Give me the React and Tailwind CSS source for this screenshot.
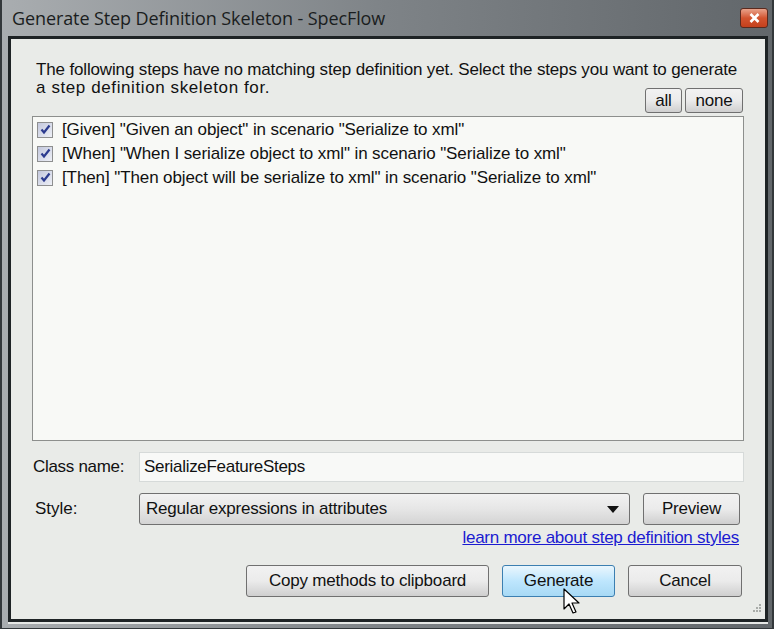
const steps = [
  '[Given] "Given an object" in scenario "Serialize to xml"',
  '[When] "When I serialize object to xml" in scenario "Serialize to xml"',
  '[Then] "Then object will be serialize to xml" in scenario "Serialize to xml"',
]

function CheckBox() {
  return (
    <div className="w-[16px] h-[16px] border border-[#8e8f8f] bg-gradient-to-br from-[#c3c8dd] to-[#eef0f6] flex items-center justify-center shrink-0">
      <svg width="11" height="11" viewBox="0 0 11 11">
        <path d="M1.5 5.5 L4 8.5 L9.5 1.5" fill="none" stroke="#2c3b8f" strokeWidth="2.2" />
      </svg>
    </div>
  )
}

function Btn({ children, className = '', primary }) {
  return (
    <button
      className={`flex items-center justify-center rounded-[3px] border text-[17px] tracking-[-0.2px] text-[#111] ${
        primary
          ? 'border-[#3c7fb1] bg-gradient-to-b from-[#eaf6fd] via-[#bee6fd] to-[#a7d9f5]'
          : 'border-[#707070] bg-gradient-to-b from-[#f2f2f2] via-[#ebebeb] to-[#cfcfcf]'
      } ${className}`}
    >
      {children}
    </button>
  )
}

export default function App() {
  return (
    <div
      className="w-[774px] h-[629px] flex flex-col bg-gradient-to-r from-[#a9adb0] via-[#7e8387] to-[#62676b] border-l-2 border-r-2 border-b border-[#33383b] pl-[6px] pr-[4px] pb-[6px] relative"
      style={{ fontFamily: '"Liberation Sans", Arial, sans-serif' }}
    >
      {/* title bar */}
      <div className="h-[36px] flex items-center justify-between pl-[4px] shrink-0">
        <span className="text-[18px] text-[#1a1d20] tracking-[-0.1px]" style={{ fontFamily: '"Open Sans", "Noto Sans", sans-serif' }}>
          Generate Step Definition Skeleton - SpecFlow
        </span>
        <div className="w-[28px] h-[20px] rounded-[3px] border border-[#5a2a1e] bg-gradient-to-b from-[#e8a28a] via-[#d2542f] to-[#c4401c] flex items-center justify-center">
          <svg width="11" height="10" viewBox="0 0 11 10">
            <path d="M1.5 1 L9.5 9 M9.5 1 L1.5 9" stroke="#fff" strokeWidth="2.6" />
          </svg>
        </div>
      </div>

      {/* client area */}
      <div className="flex-1 min-w-0 border-[3px] border-[#1e2325] bg-[#e9ebe8] flex flex-col pl-[21px] pr-[21px] pt-[22px] text-[#111] text-[17px] shadow-[0_2px_0_#e6e8e6]">
        <div className="pl-[4px] leading-[18px] tracking-[-0.15px] whitespace-nowrap">
          The following steps have no matching step definition yet. Select the steps you want to generate
        </div>
        <div className="flex items-start justify-between">
          <span className="pl-[4px] leading-[18px] tracking-[0.6px]">a step definition skeleton for.</span>
          <div className="flex gap-[3px] mr-[1px] mt-[9px]">
            <Btn className="w-[37px] h-[25px]">all</Btn>
            <Btn className="w-[58px] h-[25px]">none</Btn>
          </div>
        </div>

        <div className="mt-[3px] h-[325px] border border-[#8d8f8d] bg-[#f8f9f6] pt-[4px] pl-[4px] flex flex-col gap-[7px] tracking-[-0.1px]">
          {steps.map((s) => (
            <div key={s} className="flex items-center gap-[9px] h-[17px]">
              <CheckBox />
              <span className="whitespace-nowrap leading-[17px]">{s}</span>
            </div>
          ))}
        </div>

        <div className="flex items-center mt-[11px]">
          <span className="w-[107px] pl-[1px] tracking-[-0.3px]">Class name:</span>
          <div className="flex-1 h-[30px] border border-[#d6dad9] bg-[#f8f9f7] flex items-center pl-[4px] tracking-[-0.3px]">
            SerializeFeatureSteps
          </div>
        </div>

        <div className="flex items-center mt-[11px]">
          <span className="w-[107px] pl-[3px]">Style:</span>
          <div className="w-[491px] h-[32px] rounded-[3px] border border-[#707070] bg-gradient-to-b from-[#f2f2f2] via-[#e6e6e6] to-[#d4d4d4] flex items-center justify-between pl-[6px] pr-[10px] tracking-[-0.2px]">
            <span>Regular expressions in attributes</span>
            <svg width="12" height="7" viewBox="0 0 12 7">
              <path d="M0 0 H12 L6 7 Z" fill="#111" />
            </svg>
          </div>
          <Btn className="ml-[13px] w-[97px] h-[32px]">Preview</Btn>
        </div>

        <div className="flex justify-end mt-[3px] mr-[5px]">
          <a className="text-[#1b1bd1] underline text-[17px] leading-[19px] tracking-[-0.25px]">learn more about step definition styles</a>
        </div>

        <div className="flex justify-end gap-[13px] mt-[18px] mr-[2px]">
          <Btn className="w-[243px] h-[32px]">Copy methods to clipboard</Btn>
          <Btn primary className="w-[113px] h-[32px]">Generate</Btn>
          <Btn className="w-[114px] h-[32px]">Cancel</Btn>
        </div>
      </div>

      {/* resize grip */}
      <svg className="absolute left-[748px] top-[603px]" width="12" height="12" viewBox="0 0 12 12">
        {[[9, 1], [6, 4], [9, 4], [3, 7], [6, 7], [9, 7]].map(([x, y]) => (
          <rect key={`${x}-${y}`} x={x} y={y} width="2" height="2" fill="#a9aca9" />
        ))}
      </svg>

      {/* mouse cursor */}
      <svg className="absolute left-[561px] top-[588px]" width="20" height="28" viewBox="0 0 20 28">
        <path d="M1 1 L1 21 L6 16 L10 25 L13 24 L9 15 L16 15 Z" fill="#fff" stroke="#000" strokeWidth="1.2" strokeLinejoin="round" />
      </svg>
    </div>
  )
}
